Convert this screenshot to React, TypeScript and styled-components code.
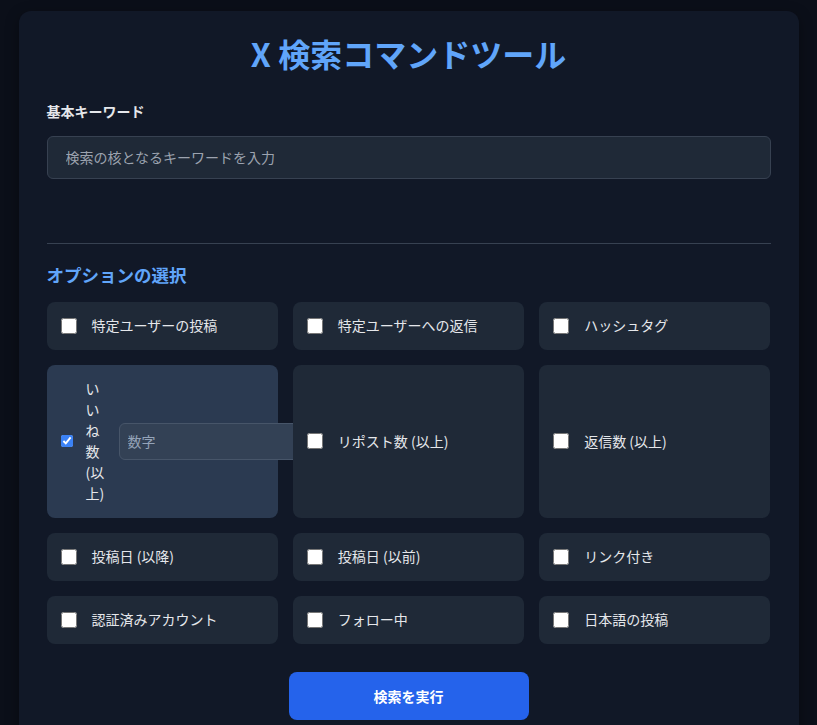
import { useState } from "react";
import styled, { createGlobalStyle } from "styled-components";

const GlobalStyle = createGlobalStyle`
    * {
        box-sizing: border-box;
    }
    body {
        margin: 0;
        background-color: #0b0f19;
        color: #e5e7eb;
        font-family: "Noto Sans CJK JP", "Noto Sans", sans-serif;
    }
`;

interface OptionType {
    id: string;
    label: string;
    hasInput?: boolean;
}

const OPTIONS: OptionType[] = [
    { id: "from", label: "特定ユーザーの投稿" },
    { id: "to", label: "特定ユーザーへの返信" },
    { id: "hashtag", label: "ハッシュタグ" },
    { id: "likes", label: "いいね数 (以上)", hasInput: true },
    { id: "retweets", label: "リポスト数 (以上)" },
    { id: "replies", label: "返信数 (以上)" },
    { id: "since", label: "投稿日 (以降)" },
    { id: "until", label: "投稿日 (以前)" },
    { id: "links", label: "リンク付き" },
    { id: "verified", label: "認証済みアカウント" },
    { id: "follows", label: "フォロー中" },
    { id: "lang", label: "日本語の投稿" },
];

const App = () => {
    const [checked, setChecked] = useState<Record<string, boolean>>({
        likes: true,
    });

    const toggle = (id: string) =>
        setChecked((prev) => ({ ...prev, [id]: !prev[id] }));

    return (
        <>
            <GlobalStyle />
            <Page>
                <Card>
                    <Title>X 検索コマンドツール</Title>

                    <Field>
                        <FieldLabel>基本キーワード</FieldLabel>
                        <KeywordInput
                            type="text"
                            placeholder="検索の核となるキーワードを入力"
                        />
                    </Field>

                    <Divider />

                    <SectionTitle>オプションの選択</SectionTitle>
                    <OptionGrid>
                        {OPTIONS.map((opt) => {
                            const isOn = !!checked[opt.id];
                            const expanded = isOn && opt.hasInput;
                            return (
                                <OptionItem key={opt.id} $active={!!expanded}>
                                    <Checkbox
                                        type="checkbox"
                                        checked={isOn}
                                        $small={!!expanded}
                                        onChange={() => toggle(opt.id)}
                                    />
                                    <OptionLabel $narrow={!!expanded}>
                                        {opt.label}
                                    </OptionLabel>
                                    {expanded && (
                                        <ValueInput
                                            type="number"
                                            placeholder="数字"
                                        />
                                    )}
                                </OptionItem>
                            );
                        })}
                    </OptionGrid>

                    <ButtonRow>
                        <SubmitButton>検索を実行</SubmitButton>
                    </ButtonRow>
                </Card>
            </Page>
        </>
    );
};

export default App;

const Page = styled.div`
    padding: 11px 0 0;
`;

const Card = styled.div`
    width: 780px;
    margin: 0 auto;
    background-color: #111827;
    border-radius: 12px;
    padding: 22px 28px 40px;
    box-shadow: 0 4px 14px rgba(0, 0, 0, 0.35);
`;

const Title = styled.h1`
    margin: 0 0 26px;
    text-align: center;
    font-size: 32px;
    font-weight: 700;
    line-height: 1.3;
    color: #60a5fa;
`;

const Field = styled.div`
    display: flex;
    flex-direction: column;
    gap: 14px;
`;

const FieldLabel = styled.label`
    font-size: 14px;
    font-weight: 700;
    color: #e5e7eb;
    line-height: 1.5;
`;

const KeywordInput = styled.input`
    width: 100%;
    height: 43px;
    padding: 0 18px;
    font-family: inherit;
    font-size: 14px;
    color: #f3f4f6;
    background-color: #1f2937;
    border: 1px solid #374151;
    border-radius: 6px;
    outline: none;

    &::placeholder {
        color: #9ca3af;
    }
`;

const Divider = styled.hr`
    border: none;
    border-top: 1px solid #374151;
    margin: 64px 0 18px;
`;

const SectionTitle = styled.h2`
    margin: 0 0 14px;
    font-size: 17.5px;
    font-weight: 700;
    line-height: 1.5;
    color: #60a5fa;
`;

const OptionGrid = styled.div`
    display: grid;
    grid-template-columns: repeat(3, 1fr);
    gap: 15px 15px;
`;

const OptionItem = styled.div<{ $active: boolean }>`
    display: flex;
    align-items: center;
    gap: 13px;
    padding: 13.5px 14px;
    border-radius: 8px;
    background-color: ${({ $active }) => ($active ? "#2b3a51" : "#1f2937")};
    min-width: 0;
`;

const Checkbox = styled.input<{ $small: boolean }>`
    flex-shrink: 0;
    margin: 0;
    width: ${({ $small }) => ($small ? "12px" : "16px")};
    height: ${({ $small }) => ($small ? "12px" : "16px")};
    margin-right: ${({ $small }) => ($small ? "0" : "2px")};
    accent-color: #3b82f6;
`;

const OptionLabel = styled.span<{ $narrow: boolean }>`
    font-size: 14px;
    line-height: 21px;
    color: #e5e7eb;
    word-break: ${({ $narrow }) => ($narrow ? "break-all" : "normal")};
    width: ${({ $narrow }) => ($narrow ? "20px" : "auto")};
    flex-shrink: 0;
`;

const ValueInput = styled.input`
    flex-shrink: 0;
    width: 180px;
    height: 37px;
    padding: 0 8px;
    font-family: inherit;
    font-size: 14px;
    color: #f3f4f6;
    background-color: #334155;
    border: 1px solid #475569;
    border-radius: 6px;
    outline: none;

    &::placeholder {
        color: #94a3b8;
    }
`;

const ButtonRow = styled.div`
    display: flex;
    justify-content: center;
    margin-top: 28px;
`;

const SubmitButton = styled.button`
    width: 240px;
    height: 48px;
    font-family: inherit;
    font-size: 14px;
    font-weight: 700;
    color: #ffffff;
    background-color: #2563eb;
    border: none;
    border-radius: 8px;
    cursor: pointer;

    &:hover {
        background-color: #1d4ed8;
    }
`;
